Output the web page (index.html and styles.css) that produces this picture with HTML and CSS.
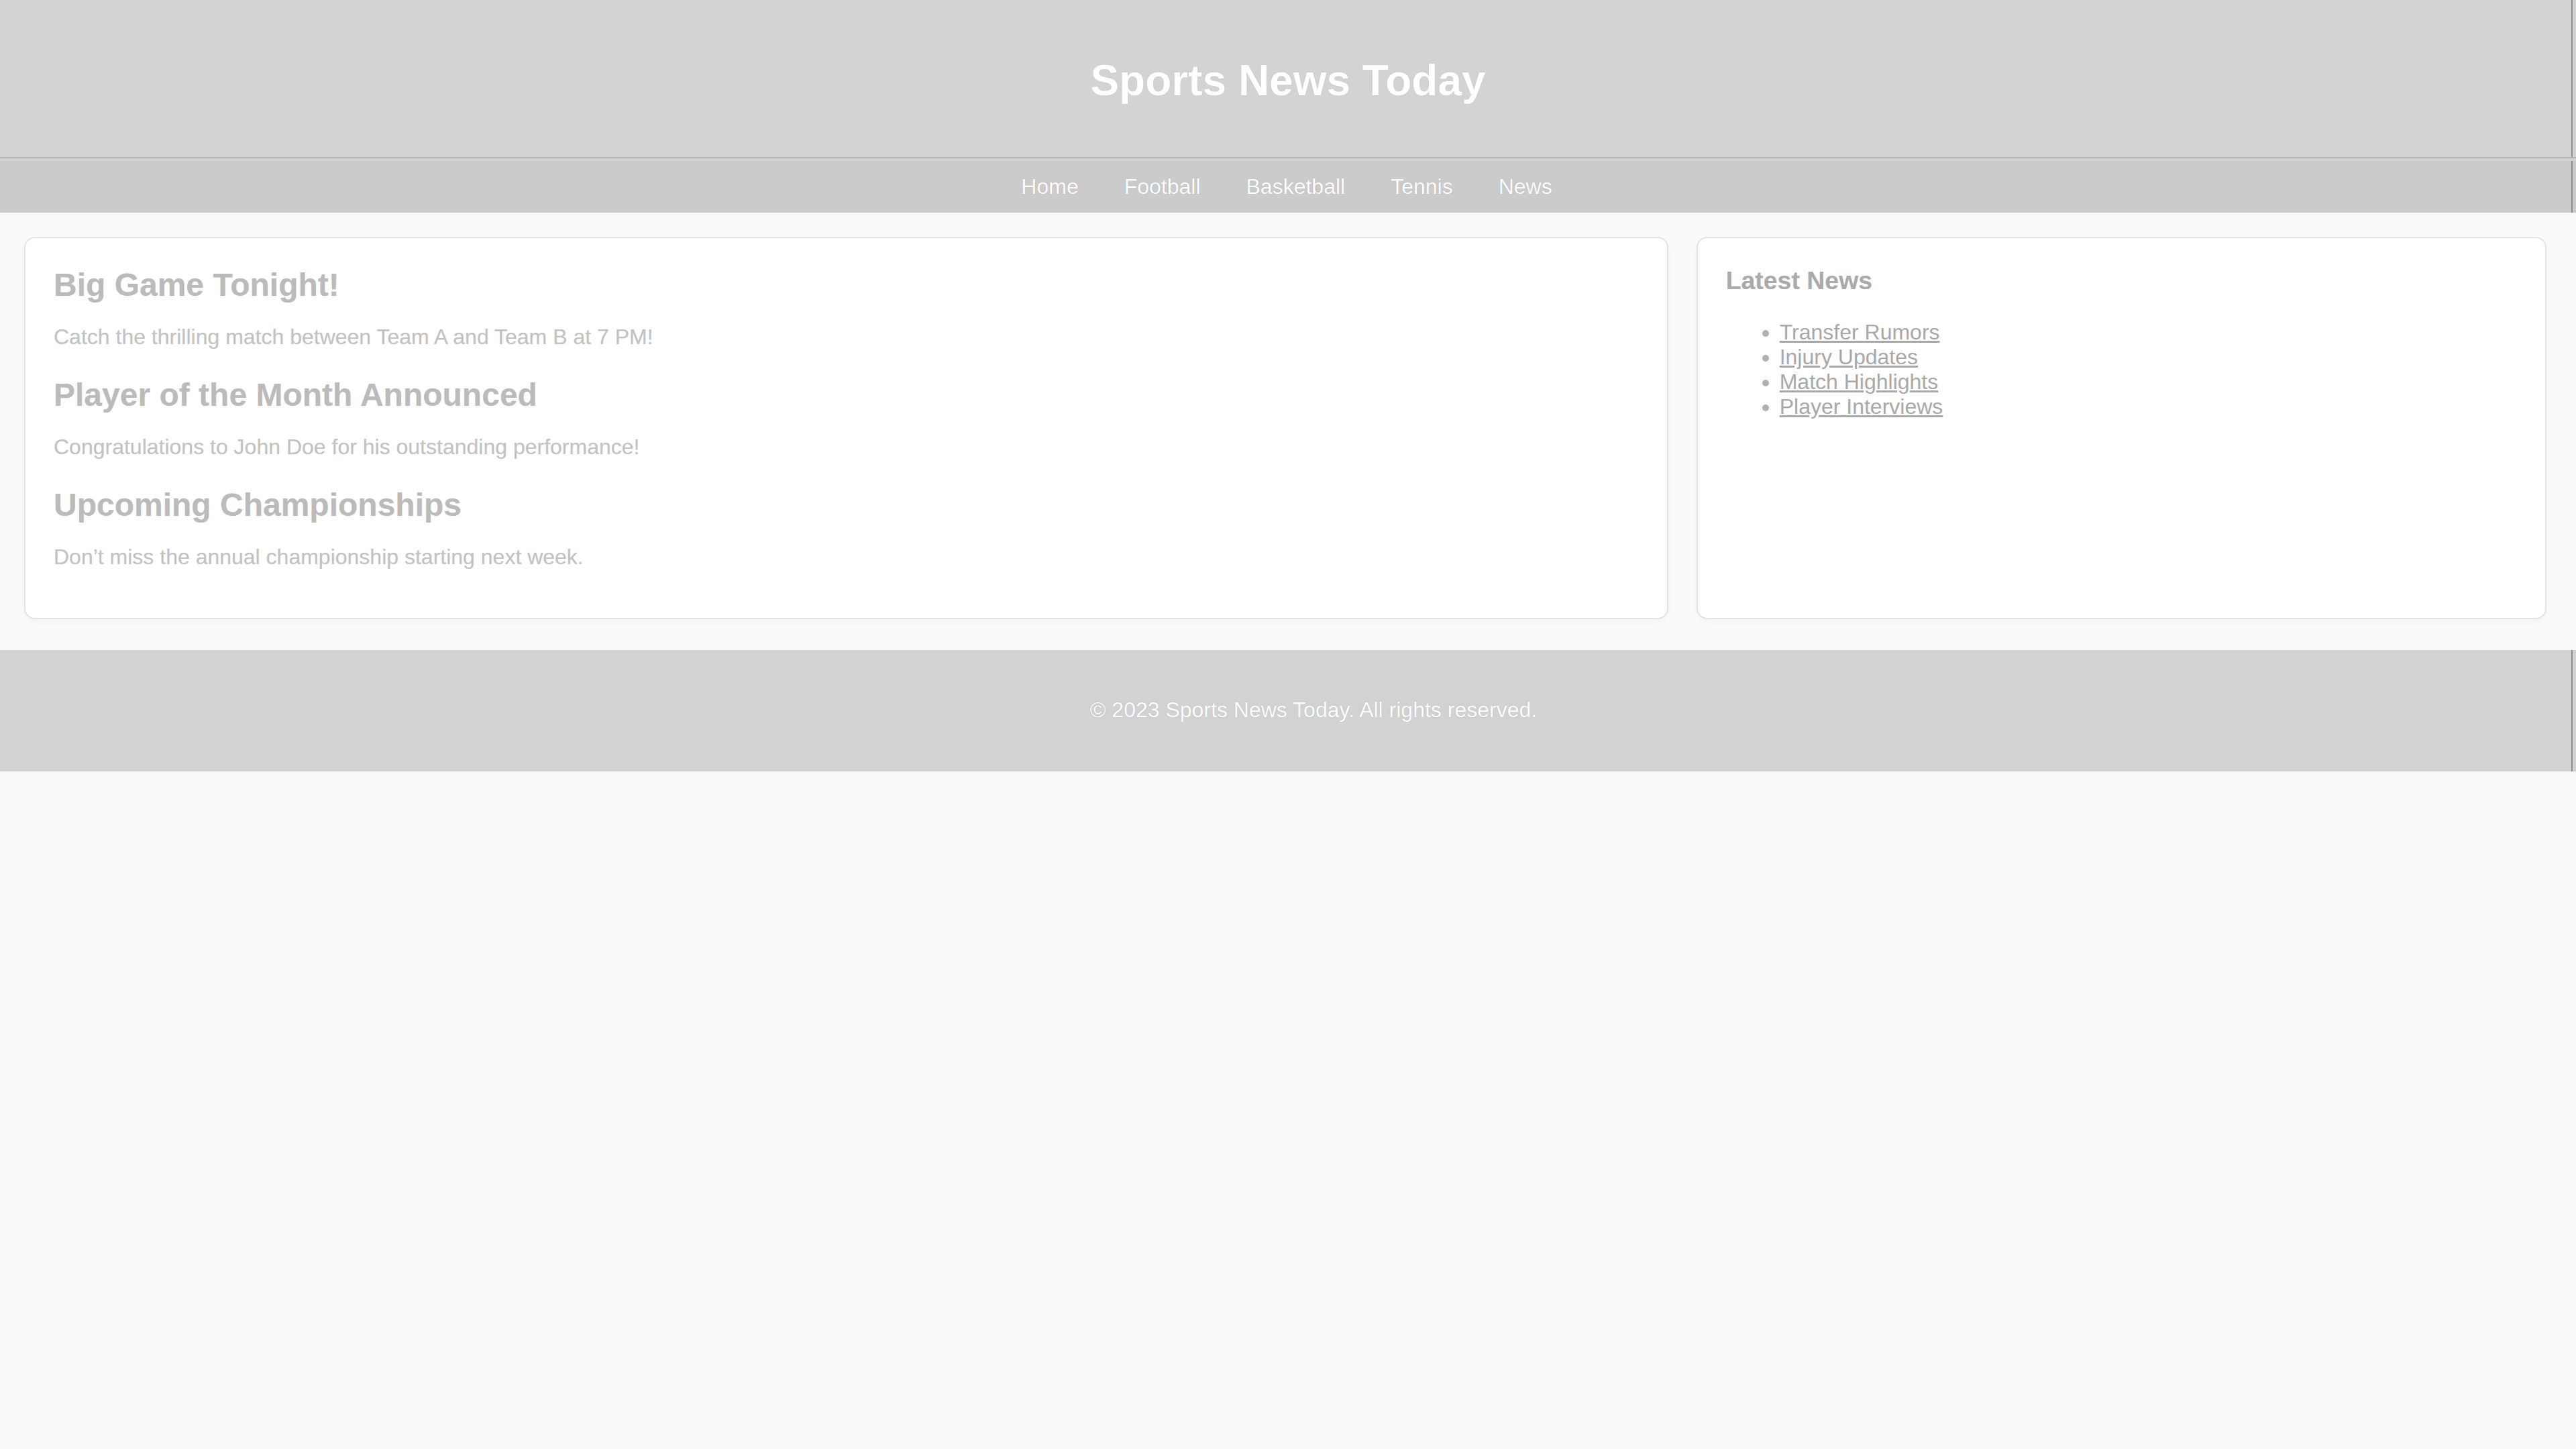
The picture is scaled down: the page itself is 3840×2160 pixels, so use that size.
FILE: index.html
```html
<!DOCTYPE html>
<html lang="en">
<head>
<meta charset="utf-8">
<title>Sports News Today</title>
<link rel="stylesheet" href="styles.css">
</head>
<body>
<header class="site-header">
  <h1 class="site-title">Sports News Today</h1>
</header>
<nav class="site-nav">
  <ul class="nav-list">
    <li><a class="nav-link" href="#">Home</a></li>
    <li><a class="nav-link" href="#">Football</a></li>
    <li><a class="nav-link" href="#">Basketball</a></li>
    <li><a class="nav-link" href="#">Tennis</a></li>
    <li><a class="nav-link" href="#">News</a></li>
  </ul>
</nav>
<main class="content">
  <section class="card main-card">
    <article class="story">
      <h2 class="story-title">Big Game Tonight!</h2>
      <p class="story-text">Catch the thrilling match between Team A and Team B at 7 PM!</p>
    </article>
    <article class="story">
      <h2 class="story-title">Player of the Month Announced</h2>
      <p class="story-text">Congratulations to John Doe for his outstanding performance!</p>
    </article>
    <article class="story">
      <h2 class="story-title">Upcoming Championships</h2>
      <p class="story-text">Don’t miss the annual championship starting next week.</p>
    </article>
  </section>
  <aside class="card sidebar">
    <h3 class="sidebar-title">Latest News</h3>
    <ul class="news-list">
      <li><a class="news-link" href="#">Transfer Rumors</a></li>
      <li><a class="news-link" href="#">Injury Updates</a></li>
      <li><a class="news-link" href="#">Match Highlights</a></li>
      <li><a class="news-link" href="#">Player Interviews</a></li>
    </ul>
  </aside>
</main>
<footer class="site-footer">
  <p class="footer-text">© 2023 Sports News Today. All rights reserved.</p>
</footer>
</body>
</html>
```

FILE: styles.css
```css
html, body {
  margin: 0;
  padding: 0;
}

body {
  background: #fafafa;
  font-family: "Liberation Sans", Arial, sans-serif;
  font-size: 32px;
  line-height: normal;
}

.site-header {
  background: #d3d3d3;
  padding: 83px 0 77px;
  text-align: center;
  border-bottom: 2px solid #b2b2b2;
  box-shadow: inset -5px 0 0 #d3d3d3, inset -7px 0 0 #8e8e8e;
}

.site-title {
  margin: 0;
  font-size: 64px;
  font-weight: bold;
  color: #ffffff;
  text-shadow: 0 0 1px rgba(0, 0, 0, 0.2);
}

.site-nav {
  background: #cbcbcb;
  border-top: 4px solid #d0d0d0;
  padding: 20px 4px 20px 0;
  box-shadow: inset -5px 0 0 #cbcbcb, inset -7px 0 0 #8e8e8e;
}

.nav-list {
  list-style: none;
  margin: 0;
  padding: 0;
  display: flex;
  justify-content: center;
  gap: 68px;
}

.nav-link {
  color: #ffffff;
  text-decoration: none;
  font-size: 32px;
  text-shadow: 0 0 1px rgba(0, 0, 0, 0.25);
}

.content {
  display: flex;
  align-items: stretch;
  gap: 42px;
  padding: 36px 44px 46px 36px;
}

.card {
  background: #ffffff;
  border: 2px solid #e3e3e3;
  border-radius: 16px;
  padding: 42px 38px 40px 42px;
  box-shadow: 0 4px 10px rgba(0, 0, 0, 0.03);
}

.main-card {
  flex: 2 1 0;
  padding-bottom: 72px;
  display: flex;
  flex-direction: column;
  gap: 40px;
}

.sidebar {
  flex: 1 1 0;
}

.story-title {
  margin: 0 0 32px;
  font-size: 48px;
  font-weight: bold;
  color: #bbbbbb;
  text-shadow: 0 0 1px rgba(0, 0, 0, 0.12);
}

.story-text {
  margin: 0;
  font-size: 32px;
  color: #c2c2c2;
  text-shadow: 0 0 1px rgba(0, 0, 0, 0.1);
}

.sidebar-title {
  margin: 0 0 37px;
  font-size: 37.44px;
  font-weight: bold;
  color: #aaaaaa;
  text-shadow: 0 0 1px rgba(0, 0, 0, 0.1);
}

.news-list {
  margin: 0;
  padding-left: 80px;
  color: #b0b0b0;
}

.news-link {
  color: #a8a8a8;
  text-decoration: underline;
}

.site-footer {
  background: #d2d2d2;
  padding: 71px 0 73px 76px;
  text-align: center;
  box-shadow: inset -5px 0 0 #d2d2d2, inset -7px 0 0 #8e8e8e;
}

.footer-text {
  margin: 0;
  color: #ffffff;
  font-size: 32px;
  text-shadow: 0 0 1px rgba(0, 0, 0, 0.25);
}
```
